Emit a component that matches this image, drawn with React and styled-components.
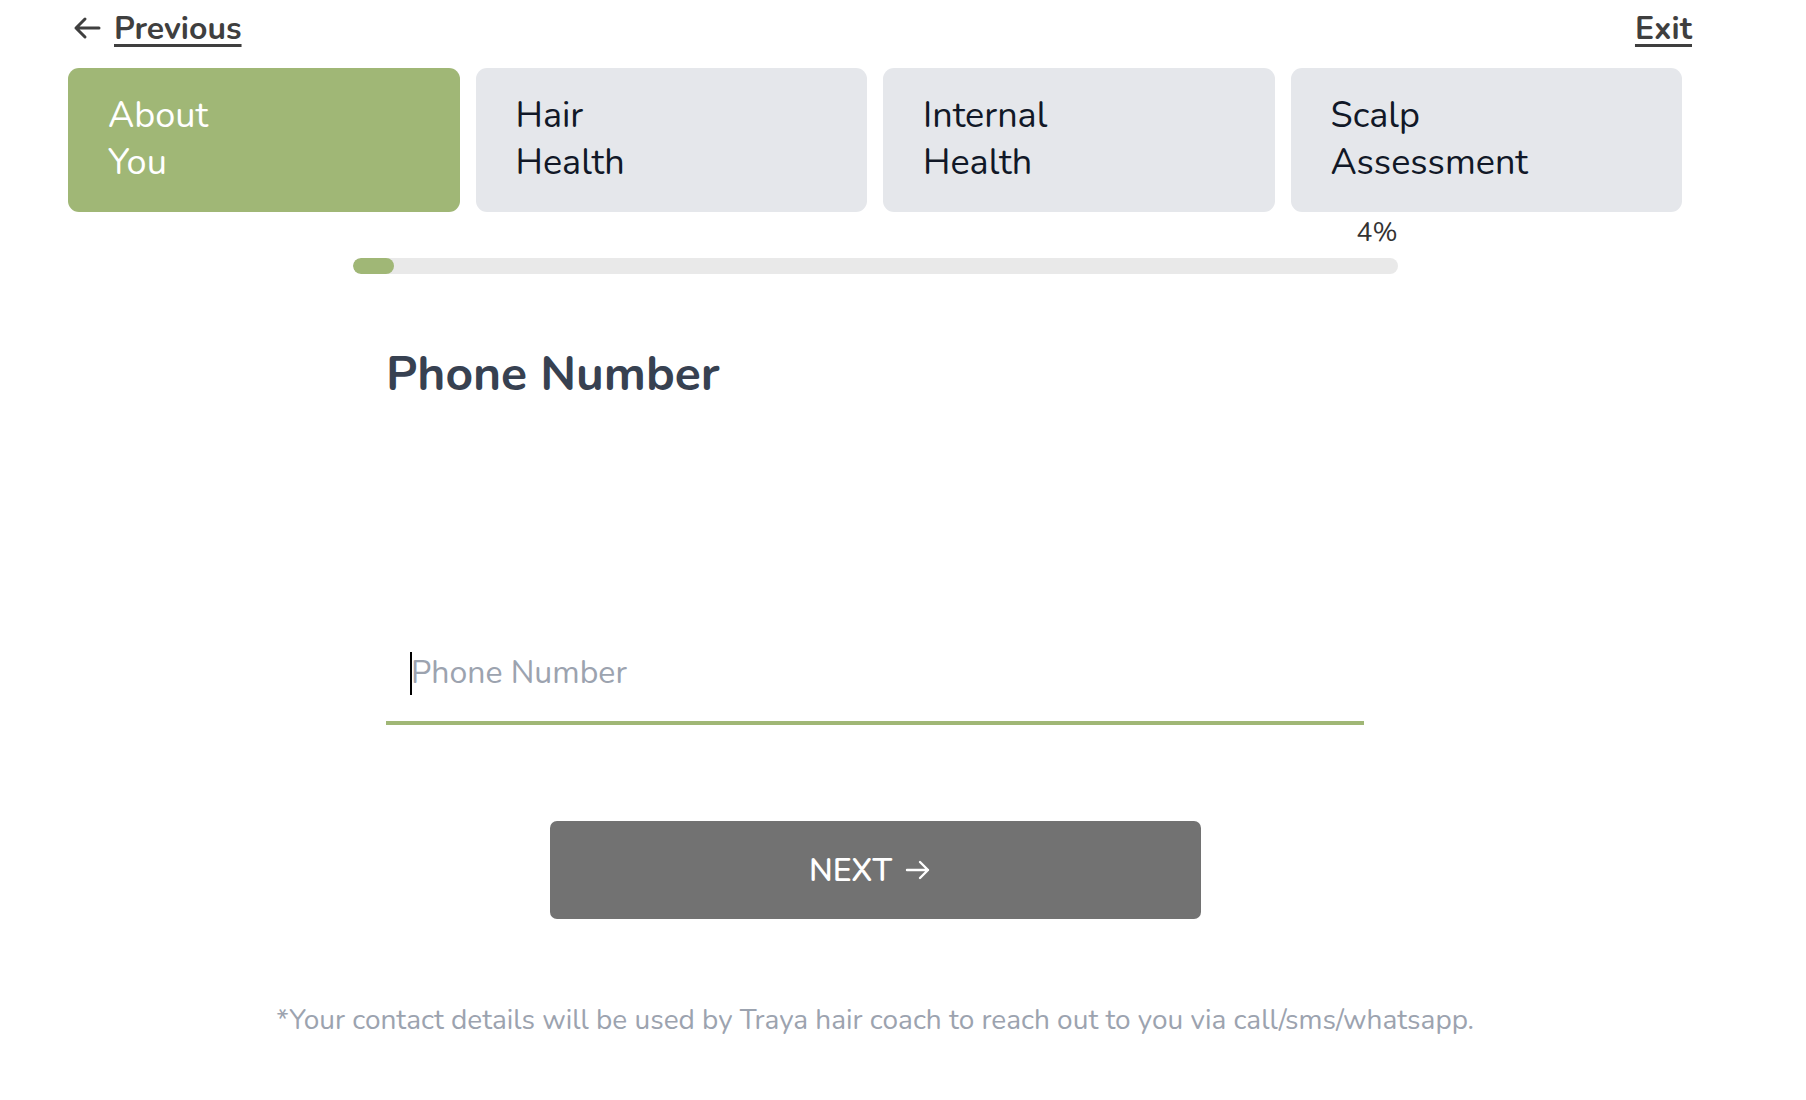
import React from "react";
import styled, { createGlobalStyle } from "styled-components";

const GlobalStyle = createGlobalStyle`
  body {
    margin: 0;
    background: #ffffff;
    font-family: "Nunito", Lato, "Open Sans", sans-serif;
  }
`;

const steps = [
  ["About", "You"],
  ["Hair", "Health"],
  ["Internal", "Health"],
  ["Scalp", "Assessment"],
];

const progress = 4;

function App() {
  return (
    <>
      <GlobalStyle />
      <Page>
        <TopBar>
          <NavLink href="#">
            <svg width="28" height="24" viewBox="0 0 28 24" fill="none">
              <path
                d="M26 12H3M12 3L3 12l9 9"
                stroke="#3f3f3f"
                strokeWidth="3"
                strokeLinecap="round"
                strokeLinejoin="round"
              />
            </svg>
            <span>Previous</span>
          </NavLink>
          <NavLink href="#">
            <span>Exit</span>
          </NavLink>
        </TopBar>

        <Steps>
          {steps.map((lines, i) => (
            <Step key={i} $active={i === 0}>
              {lines.map((l) => (
                <span key={l}>{l}</span>
              ))}
            </Step>
          ))}
        </Steps>

        <Progress>
          <Percent>{progress}%</Percent>
          <Track>
            <Fill style={{ width: `${progress}%` }} />
          </Track>
        </Progress>

        <Question>
          <Heading>Phone Number</Heading>
          <Field>
            <Caret />
            <Input type="tel" placeholder="Phone Number" />
          </Field>
        </Question>

        <NextButton type="button">
          NEXT
          <svg width="26" height="20" viewBox="0 0 26 20" fill="none">
            <path
              d="M2 10h21M15 2l8 8-8 8"
              stroke="#ffffff"
              strokeWidth="2.4"
              strokeLinecap="round"
              strokeLinejoin="round"
            />
          </svg>
        </NextButton>

        <Note>
          *Your contact details will be used by Traya hair coach to reach out to
          you via call/sms/whatsapp.
        </Note>
      </Page>
    </>
  );
}

export default App;

const Page = styled.div`
  width: 1614px;
  margin-left: 68px;
  display: flex;
  flex-direction: column;
  align-items: center;
`;

const TopBar = styled.div`
  align-self: stretch;
  margin-right: -10px;
  height: 56px;
  margin-bottom: 12px;
  display: flex;
  justify-content: space-between;
  align-items: center;
`;

const NavLink = styled.a`
  display: flex;
  align-items: center;
  gap: 13px;
  color: #3f3f3f;
  font-size: 32px;
  font-weight: 700;
  text-decoration: underline;
  text-decoration-thickness: 3px;
  text-underline-offset: 5px;
  svg {
    margin-left: 5px;
  }
`;

const Steps = styled.div`
  align-self: stretch;
  display: grid;
  grid-template-columns: repeat(4, 1fr);
  gap: 16px;
`;

const Step = styled.div`
  height: 144px;
  box-sizing: border-box;
  padding: 0 40px 3px;
  border-radius: 11px;
  display: flex;
  flex-direction: column;
  justify-content: center;
  background: ${(p) => (p.$active ? "#a0b776" : "#e5e7eb")};
  color: ${(p) => (p.$active ? "#ffffff" : "#111827")};
  font-size: 36px;
  line-height: 47px;
`;

const Progress = styled.div`
  width: 1045px;
  display: flex;
  flex-direction: column;
  align-items: flex-end;
  gap: 8px;
  margin-top: 4px;
`;

const Percent = styled.div`
  font-size: 27px;
  line-height: 34px;
  color: #333333;
`;

const Track = styled.div`
  align-self: stretch;
  height: 16px;
  border-radius: 8px;
  background: #e9e9e9;
  overflow: hidden;
`;

const Fill = styled.div`
  height: 100%;
  border-radius: 8px;
  background: #a0b776;
`;

const Question = styled.div`
  width: 978px;
  margin-top: 72px;
  display: flex;
  flex-direction: column;
  gap: 243px;
`;

const Heading = styled.h1`
  margin: 0;
  font-size: 48px;
  line-height: 56px;
  font-weight: 700;
  color: #374151;
`;

const Field = styled.div`
  position: relative;
`;

const Caret = styled.span`
  position: absolute;
  left: 24px;
  top: 7px;
  width: 2px;
  height: 43px;
  background: #000000;
`;

const Input = styled.input`
  display: block;
  width: 100%;
  box-sizing: border-box;
  height: 80px;
  padding: 0 0 22px 25px;
  border: none;
  border-bottom: 4px solid #a0b776;
  outline: none;
  font-family: inherit;
  font-size: 32px;
  color: #111827;
  caret-color: transparent;
  &::placeholder {
    color: #9ca3af;
  }
`;

const NextButton = styled.button`
  margin-top: 96px;
  width: 651px;
  height: 98px;
  padding: 0 10px 0 0;
  border: none;
  border-radius: 7px;
  background: #727272;
  color: #ffffff;
  font-family: inherit;
  font-size: 32px;
  font-weight: 600;
  display: flex;
  align-items: center;
  justify-content: center;
  gap: 13px;
  cursor: pointer;
`;

const Note = styled.p`
  margin: 82px 0 0;
  font-size: 28px;
  color: #9ca3af;
  text-align: center;
`;
